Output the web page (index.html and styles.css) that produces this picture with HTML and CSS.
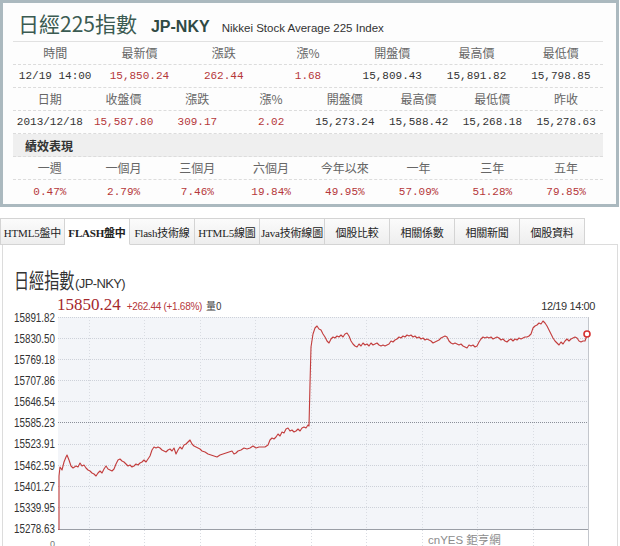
FILE: index.html
```html
<!DOCTYPE html>
<html lang="zh-Hant">
<head>
<meta charset="utf-8">
<title>日經225指數</title>
<link rel="stylesheet" href="styles.css">
</head>
<body>
<section class="quote">
  <header class="quote-head">
    <h1 class="quote-title">日經225指數</h1>
    <span class="quote-code">JP-NKY</span>
    <span class="quote-name">Nikkei Stock Average 225 Index</span>
  </header>
  <div class="row cols7 label">
    <span>時間</span><span>最新價</span><span>漲跌</span><span>漲%</span><span>開盤價</span><span>最高價</span><span>最低價</span>
  </div>
  <div class="row cols7 data">
    <span>12/19 14:00</span><span class="up">15,850.24</span><span class="up">262.44</span><span class="up">1.68</span><span>15,809.43</span><span>15,891.82</span><span>15,798.85</span>
  </div>
  <div class="row cols8 label">
    <span>日期</span><span>收盤價</span><span>漲跌</span><span>漲%</span><span>開盤價</span><span>最高價</span><span>最低價</span><span>昨收</span>
  </div>
  <div class="row cols8 data">
    <span>2013/12/18</span><span class="up">15,587.80</span><span class="up">309.17</span><span class="up">2.02</span><span>15,273.24</span><span>15,588.42</span><span>15,268.18</span><span>15,278.63</span>
  </div>
  <div class="row band">績效表現</div>
  <div class="row cols8 label">
    <span>一週</span><span>一個月</span><span>三個月</span><span>六個月</span><span>今年以來</span><span>一年</span><span>三年</span><span>五年</span>
  </div>
  <div class="row cols8 data">
    <span class="up">0.47%</span><span class="up">2.79%</span><span class="up">7.46%</span><span class="up">19.84%</span><span class="up">49.95%</span><span class="up">57.09%</span><span class="up">51.28%</span><span class="up">79.85%</span>
  </div>
</section>

<nav class="tabs">
  <span class="tab">HTML5盤中</span>
  <span class="tab active">FLASH盤中</span>
  <span class="tab">Flash技術線</span>
  <span class="tab">HTML5線圖</span>
  <span class="tab">Java技術線圖</span>
  <span class="tab">個股比較</span>
  <span class="tab">相關係數</span>
  <span class="tab">相關新聞</span>
  <span class="tab">個股資料</span>
</nav>

<section class="chart-panel">
  <h2 class="chart-title"><span class="chart-name">日經指數</span><span class="chart-code">(JP-NKY)</span></h2>
  <div class="chart-meta">
    <span class="last">15850.24</span>
    <span class="chg">+262.44 (+1.68%)</span>
    <span class="vol">量0</span>
    <span class="stamp">12/19 14:00</span>
  </div>
  <svg class="chart" width="614" height="240" viewBox="3 307 614 240" xmlns="http://www.w3.org/2000/svg">
    <rect x="58" y="313" width="530" height="212" fill="#f3f5f9"/>
    <g stroke="#cdd1d9" stroke-width="1" stroke-dasharray="1 1" fill="none">
      <line x1="58" y1="313.5" x2="588" y2="313.5"/>
      <line x1="58" y1="334.5" x2="588" y2="334.5"/>
      <line x1="58" y1="355.5" x2="588" y2="355.5"/>
      <line x1="58" y1="376.5" x2="588" y2="376.5"/>
      <line x1="58" y1="397.5" x2="588" y2="397.5"/>
      <line x1="58" y1="440.5" x2="588" y2="440.5"/>
      <line x1="58" y1="461.5" x2="588" y2="461.5"/>
      <line x1="58" y1="482.5" x2="588" y2="482.5"/>
      <line x1="58" y1="503.5" x2="588" y2="503.5"/>
    </g>
    <g stroke="#d9dce2" stroke-width="1" stroke-dasharray="1 2" fill="none">
      <line x1="89.5" y1="313" x2="89.5" y2="546"/>
      <line x1="144.5" y1="313" x2="144.5" y2="546"/>
      <line x1="200.5" y1="313" x2="200.5" y2="546"/>
      <line x1="255.5" y1="313" x2="255.5" y2="546"/>
      <line x1="311.5" y1="313" x2="311.5" y2="546"/>
      <line x1="366.5" y1="313" x2="366.5" y2="546"/>
      <line x1="422.5" y1="313" x2="422.5" y2="546"/>
      <line x1="477.5" y1="313" x2="477.5" y2="546"/>
      <line x1="533.5" y1="313" x2="533.5" y2="546"/>
    </g>
    <line x1="58" y1="418.5" x2="588" y2="418.5" stroke="#8a8f99" stroke-width="1" stroke-dasharray="1 1"/>
    <line x1="58" y1="525.5" x2="588" y2="525.5" stroke="#9a9ea6" stroke-width="1"/>
    <line x1="588.5" y1="313" x2="588.5" y2="546" stroke="#c3c6cc" stroke-width="1"/>
    <line x1="58" y1="543.5" x2="588" y2="543.5" stroke="#e2e4e8" stroke-width="1"/>
    <g class="ylab" text-anchor="end">
      <text x="55" y="318" textLength="41" lengthAdjust="spacingAndGlyphs">15891.82</text>
      <text x="55" y="339" textLength="41" lengthAdjust="spacingAndGlyphs">15830.50</text>
      <text x="55" y="360" textLength="41" lengthAdjust="spacingAndGlyphs">15769.18</text>
      <text x="55" y="381" textLength="41" lengthAdjust="spacingAndGlyphs">15707.86</text>
      <text x="55" y="402" textLength="41" lengthAdjust="spacingAndGlyphs">15646.54</text>
      <text x="55" y="423" textLength="41" lengthAdjust="spacingAndGlyphs">15585.23</text>
      <text x="55" y="444" textLength="41" lengthAdjust="spacingAndGlyphs">15523.91</text>
      <text x="55" y="466" textLength="41" lengthAdjust="spacingAndGlyphs">15462.59</text>
      <text x="55" y="487" textLength="41" lengthAdjust="spacingAndGlyphs">15401.27</text>
      <text x="55" y="508" textLength="41" lengthAdjust="spacingAndGlyphs">15339.95</text>
      <text x="55" y="529" textLength="41" lengthAdjust="spacingAndGlyphs">15278.63</text>
      <text class="zero" x="55" y="543">0</text>
    </g>
    <text class="brand" x="428" y="540">cnYES 鉅亨網</text>
    <path fill="none" stroke="#c23c3c" stroke-width="1.1" stroke-linejoin="round" d="M59,526 L59,472 L60,463 L62,466 L64,458 L66,453 L67,451 L69,456 L71,462 L73,464 L76,462 L78,463 L80,459 L82,462 L84,461 L86,464 L88,466 L90,467 L92,469 L94,470 L96,472 L98,469 L100,467 L102,469 L104,465 L106,462 L108,465 L110,466 L112,467 L114,465 L116,460 L118,456 L120,455 L122,457 L124,458 L126,460 L128,462 L130,461 L132,463 L134,462 L136,460 L138,461 L140,459 L142,458 L144,456 L146,458 L148,455 L150,452 L152,446 L154,443 L156,444 L158,443 L160,444 L162,446 L164,447 L166,448 L168,446 L170,445 L172,447 L174,444 L176,450 L178,446 L180,443 L182,445 L184,441 L186,440 L188,438 L190,436 L192,440 L194,442 L196,443 L198,444 L200,445 L202,447 L205,448 L208,450 L211,451 L214,452 L217,453 L220,451 L223,450 L226,449 L229,448 L232,447 L234,450 L236,449 L238,447 L241,446 L244,444 L247,445 L250,444 L253,442 L256,444 L259,443 L262,443 L265,443 L268,441 L270,436 L272,434 L274,435 L276,433 L278,430 L280,432 L282,428 L284,429 L286,425 L288,424 L290,427 L292,426 L294,428 L296,427 L298,425 L300,427 L302,424 L304,423 L306,424 L308,421 L309,422 L310,380 L311,343 L313,330 L315,324 L317,322 L319,325 L321,326 L323,330 L325,333 L327,337 L329,339 L331,335 L333,333 L335,334 L337,332 L339,333 L341,331 L343,333 L345,330 L347,329 L349,332 L351,337 L353,340 L355,342 L357,343 L359,340 L361,342 L363,339 L365,341 L367,340 L369,342 L371,339 L373,341 L375,340 L377,339 L379,341 L381,342 L383,341 L385,342 L387,341 L389,340 L391,337 L393,338 L395,336 L397,335 L399,333 L401,334 L403,332 L405,333 L407,331 L409,332 L411,331 L413,333 L415,332 L417,334 L419,333 L421,335 L423,334 L425,336 L427,335 L429,336 L431,337 L433,339 L435,338 L437,337 L439,336 L441,334 L443,333 L445,332 L447,333 L449,337 L451,339 L453,340 L455,339 L457,340 L459,341 L461,340 L463,342 L465,343 L467,344 L469,341 L471,342 L473,341 L475,343 L477,342 L479,338 L481,335 L483,333 L485,334 L487,333 L489,334 L491,333 L493,335 L495,334 L497,333 L499,334 L501,336 L503,335 L505,337 L507,338 L509,336 L511,335 L513,337 L515,335 L517,336 L519,334 L521,335 L523,334 L525,333 L527,333 L529,332 L531,330 L533,324 L535,322 L537,321 L539,319 L541,320 L543,317 L545,319 L547,322 L549,326 L551,330 L553,334 L555,337 L557,339 L559,341 L561,338 L563,340 L565,337 L567,335 L569,337 L571,335 L573,334 L575,333 L577,334 L579,337 L581,338 L583,337 L585,337 L587,331"/>
    <circle cx="587" cy="330" r="3" fill="#fff" stroke="#d63030" stroke-width="1.6"/>
  </svg>
</section>
</body>
</html>
```

FILE: styles.css
```css
html, body {
  margin: 0;
  padding: 0;
  background: #ffffff;
}

body {
  width: 620px;
  height: 546px;
  overflow: hidden;
  font-family: "Noto Sans CJK TC", "Liberation Sans", sans-serif;
  color: #333;
}

/* ---------- quote panel ---------- */
.quote {
  box-sizing: border-box;
  width: 619px;
  height: 207px;
  border: 3px solid #abb9bf;
  background: #fdfdfd;
  padding: 0 13px 0 10px;
}

.quote-head {
  box-sizing: border-box;
  height: 39px;
  display: flex;
  align-items: baseline;
  gap: 14px;
  padding: 6px 0 0 5px;
  border-bottom: 1px solid #e1e1e1;
}

.quote-title {
  margin: 0;
  font-size: 21px;
  font-weight: normal;
  color: #3b5b52;
  line-height: 28px;
  font-family: "Noto Sans CJK TC", sans-serif;
}

.quote-code {
  font-family: "Liberation Sans", sans-serif;
  font-weight: bold;
  font-size: 16px;
  color: #2f4a44;
}

.quote-name {
  font-family: "Liberation Sans", sans-serif;
  font-size: 11.5px;
  color: #333;
  margin-left: -2px;
}

.row {
  box-sizing: border-box;
  height: 23px;
  display: grid;
  align-items: center;
  text-align: center;
  border-bottom: 1px dashed #dcdcdc;
}

.cols7 { grid-template-columns: repeat(7, 1fr); }
.cols8 { grid-template-columns: repeat(8, 1fr); }

.label {
  font-size: 12px;
  color: #666;
  line-height: 1;
}

.data {
  font-family: "Liberation Mono", "Noto Sans CJK TC", monospace;
  font-size: 11px;
  color: #333;
}

.data .up {
  color: #b5373a;
}

.band {
  display: block;
  text-align: left;
  background: #efefef;
  padding-left: 12px;
  font-size: 12px;
  font-weight: bold;
  line-height: 23px;
  color: #333;
  border-bottom: 1px dashed #dcdcdc;
}

.quote .row:last-child {
  border-bottom: none;
}

/* ---------- tabs ---------- */
.tabs {
  display: flex;
  margin-top: 11px;
  padding-left: 0;
  height: 27px;
  position: relative;
  z-index: 1;
}

.tab {
  box-sizing: border-box;
  width: 65px;
  height: 27px;
  display: flex;
  align-items: center;
  justify-content: center;
  font-family: "Liberation Serif", "Noto Sans CJK TC", serif;
  font-size: 11px;
  color: #222;
  white-space: nowrap;
  letter-spacing: -0.2px;
  background: linear-gradient(#fbfbfb, #eeeeee);
  border: 1px solid #d4d4d4;
  border-left: none;
}

.tab:first-child {
  border-left: 1px solid #d4d4d4;
}

.tab.active {
  font-weight: bold;
  background: #ffffff;
  border-bottom-color: #ffffff;
}

/* ---------- chart panel ---------- */
.chart-panel {
  box-sizing: border-box;
  width: 616px;
  margin: -1px 0 0 2px;
  border: 1px solid #dcdcdc;
  border-bottom: none;
  height: 302px;
  background: #fff;
}

.chart-title {
  margin: 0;
  padding: 19px 0 0 11px;
  height: 31px;
  font-weight: normal;
  line-height: 28px;
  color: #333;
  white-space: nowrap;
}

.chart-name {
  display: inline-block;
  font-size: 21px;
  transform: scaleX(0.72);
  transform-origin: left center;
  margin-right: -23px;
}

.chart-code {
  font-family: "Liberation Sans", sans-serif;
  font-size: 13px;
  letter-spacing: -0.6px;
}

.chart-meta {
  display: flex;
  align-items: baseline;
  height: 16px;
  padding: 0 22px 0 54px;
  white-space: nowrap;
}

.last {
  font-family: "Liberation Serif", serif;
  font-size: 17px;
  color: #a5282c;
}

.chg {
  margin-left: 6px;
  font-family: "Liberation Sans", sans-serif;
  font-size: 10px;
  color: #b5373a;
  letter-spacing: -0.3px;
}

.vol {
  margin-left: 4px;
  font-size: 10px;
  color: #444;
}

.stamp {
  margin-left: auto;
  font-family: "Liberation Sans", sans-serif;
  font-size: 11px;
  color: #333;
  letter-spacing: -0.4px;
}

.chart {
  display: block;
}

.ylab text {
  font-family: "Liberation Sans", sans-serif;
  font-size: 12px;
  fill: #333;
}

.ylab .zero {
  font-size: 9px;
  fill: #777;
}

.brand {
  font-family: "Liberation Sans", "Noto Sans CJK TC", sans-serif;
  font-size: 11.5px;
  fill: #8c8c8c;
}
```
